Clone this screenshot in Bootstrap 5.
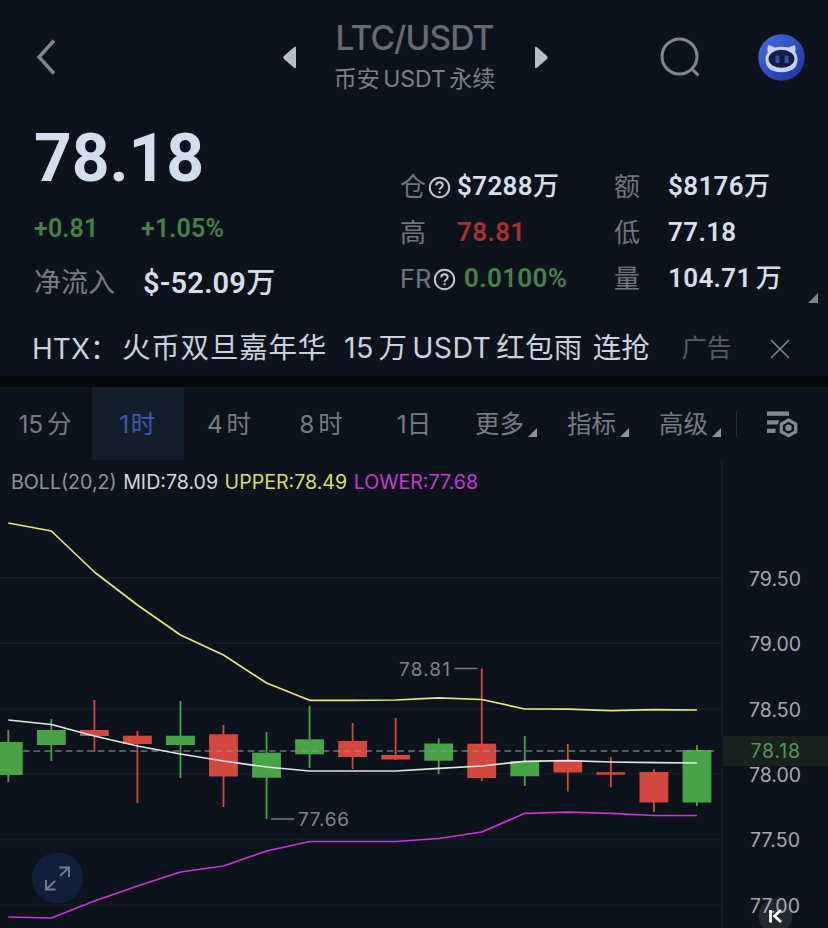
<!DOCTYPE html>
<html lang="zh-CN">
<head>
<meta charset="utf-8">
<meta name="viewport" content="width=device-width, initial-scale=1">
<title>LTC/USDT</title>
<link href="https://cdn.jsdelivr.net/npm/bootstrap@5.3.0/dist/css/bootstrap.min.css" rel="stylesheet">
<style>
:root{--ui:Inter,"Noto Sans CJK SC",sans-serif;--num:Roboto,"Noto Sans CJK SC",sans-serif}
html,body{height:100%}
body{background:#0c121b;color:#d7dfee;font-family:var(--ui);overflow:hidden;line-height:1}
svg{display:block;flex:none}
.text-dim{color:#777c85}
.text-up{color:#46804a}
.text-down{color:#a82f2a}
.topbar{height:114px;padding:0 23px 0 36px}
.topbar .pair{width:238px;padding-right:3px}
.prev{margin-left:227px}
.find{margin-left:111px}
.pair-name{font-size:33.5px;font-weight:500;letter-spacing:-.9px;line-height:40px;margin-top:-3px;color:#646972}
.pair-sub{font-size:23px;line-height:30px;margin-top:6px;word-spacing:-3px;color:#7a7f88}
.quote{height:207px;padding-left:34px;font-family:var(--num)}
.last-col{width:366px}
.last-price{font-size:66px;font-weight:700;line-height:90px;height:90px;letter-spacing:-.1px;color:#d3dfee}
.delta{font-size:25px;font-weight:600;line-height:49px;letter-spacing:.15px}
.delta span:first-child{width:107px}
.flow-row{line-height:60px;font-size:29px}
.flow-row .k{width:109px;font-size:27px}
.flow-row .v{font-weight:600;letter-spacing:.2px}
.stats{padding-top:49px;line-height:46px;font-size:26px}
.stats .k{font-family:var(--ui);font-size:26px;line-height:44px;padding-top:2px;color:#70757e}
.stats .v{font-weight:600;letter-spacing:.35px}
.cjk{font-weight:500}
.c1{width:57px}
.c1 svg{margin-left:2px}
.fr{width:64px}
.fr .lbl{font-size:25.5px}
.stat-a{width:214px}
.c2{width:54px}
.promo{height:55px;padding:0 37px 0 32px;font-size:28.5px;color:#cbd1de}
.promo-brand{font-size:28px}
.promo-head{margin-left:4px;letter-spacing:.8px}
.promo-body{margin-left:17px;letter-spacing:.35px;word-spacing:-3.5px}
.promo-tail{margin-left:10px}
.ad-mark{margin-left:32px;font-size:25px;color:#565b65}
.divider{height:11px;background:#04070b}
.tabs-row{height:73px;font-size:24.5px;color:#757b85}
.tabs-row .tab{width:92px;height:73px;padding-top:1px;word-spacing:-3px}
.tab.plain{padding-right:2px}
.tab.current{background:#131e2d;color:#355cae}
.tab.tight{letter-spacing:1.5px}
.tab svg{margin:17px 0 0 4px}
.sep{width:1px;height:26px;background:#2a303a}
.tune{margin-left:29px}
.chart{height:468px}
.legend-row{top:11px;left:11px;font-size:19.6px;line-height:22px;gap:6.500px}
.lg-name{color:#8f949d}
.lg-mid{color:#d5d8dd}
.lg-up{color:#dede62}
.lg-low{color:#c63ad3}
.chart text{font-family:var(--ui)}
</style>
<script src="https://cdn.jsdelivr.net/npm/bootstrap@5.3.0/dist/js/bootstrap.bundle.min.js"></script>
</head>
<body>
<header class="topbar d-flex align-items-center">
  <svg width="20" height="36" viewBox="0 0 20 36" fill="none" stroke="#80858e" stroke-width="3.400"><path d="M18 1.500 3 18 18 34.500"/></svg>
  <svg class="prev" width="14" height="23" viewBox="0 0 14 23"><path d="M13 2v19q0 2-2 .7L1 13q-1.500-1.500 0-3L11 1.300q2-1.300 2 .7Z" fill="#b9bec6"/></svg>
  <div class="pair text-center">
    <div class="pair-name">LTC/USDT</div>
    <div class="pair-sub">币安 USDT 永续</div>
  </div>
  <svg width="14" height="23" viewBox="0 0 14 23"><path d="M0 2v19q0 2 2 .7L12 13q1.500-1.500 0-3L2 1.300Q0 0 0 2Z" fill="#b9bec6"/></svg>
  <svg class="find" width="42" height="42" viewBox="0 0 42 42" fill="none" stroke="#82878f" stroke-width="3"><circle cx="19.500" cy="20.500" r="17.500"/><path d="m31 32 7.500 7.500"/></svg>
  <svg class="ms-auto" width="47" height="47" viewBox="0 0 47 47"><defs><linearGradient id="g" x1="0" y1="0" x2="1" y2="1"><stop offset="0" stop-color="#456cdb"/><stop offset="1" stop-color="#18349f"/></linearGradient></defs><circle cx="23.500" cy="23.500" r="23.200" fill="url(#g)"/><path d="M10 11.300q4 .2 6.500 2.200 7-1.400 14 0 2.500-2 6.500-2.200 1 3 .3 7 2.200 3 2.200 7 0 12.900-16 12.900T7.500 25.300q0-4 2.200-7-.7-4 .3-7Z" fill="#c3d1f4"/><ellipse cx="23.500" cy="24.800" rx="13" ry="9" fill="#121e39"/><rect x="17.400" y="21.500" width="4" height="7.500" rx="1" fill="#304fc2"/><rect x="26.600" y="21.500" width="4" height="7.500" rx="1" fill="#304fc2"/></svg>
</header>

<section class="quote d-flex">
  <div class="last-col">
    <div class="last-price">78.18</div>
    <div class="delta text-up d-flex"><span>+0.81</span><span>+1.05%</span></div>
    <div class="flow-row d-flex"><span class="k text-dim">净流入</span><span class="v">$-52.09<span class="cjk">万</span></span></div>
  </div>
  <div class="stats stat-a">
    <div class="d-flex"><div class="k c1 d-flex align-items-center">仓<svg width="23" height="23" viewBox="0 0 23 23" fill="none" stroke="#c3c9d4" stroke-width="2"><circle cx="11.500" cy="11.500" r="9.700"/><path d="M8.300 9.500q0-3.200 3.200-3.200t3.200 2.800q0 1.500-1.500 2.400-1.500.9-1.500 2.300M11.600 15.300v2"/></svg></div><div class="v">$7288<span class="cjk">万</span></div></div>
    <div class="d-flex"><div class="k c1">高</div><div class="v text-down">78.81</div></div>
    <div class="d-flex"><div class="k c1 fr d-flex align-items-center"><span class="lbl">FR</span><svg width="23" height="23" viewBox="0 0 23 23" fill="none" stroke="#c3c9d4" stroke-width="2"><circle cx="11.500" cy="11.500" r="9.700"/><path d="M8.300 9.500q0-3.200 3.200-3.200t3.200 2.800q0 1.500-1.500 2.400-1.500.9-1.500 2.300M11.600 15.300v2"/></svg></div><div class="v text-up">0.0100%</div></div>
  </div>
  <div class="stats">
    <div class="d-flex"><div class="k c2">额</div><div class="v">$8176<span class="cjk">万</span></div></div>
    <div class="d-flex"><div class="k c2">低</div><div class="v">77.18</div></div>
    <div class="d-flex"><div class="k c2">量</div><div class="v">104.71<span class="cjk ms-1">万</span></div></div>
  </div>
  <svg class="ms-auto align-self-end mb-3" width="20" height="13" viewBox="0 0 20 13"><path d="M10 1v10H0Z" fill="#7f848d"/></svg>
</section>

<section class="promo d-flex align-items-center text-nowrap">
  <span class="promo-brand">HTX：</span><span class="promo-head">火币双旦嘉年华</span><span class="promo-body">15 万 USDT 红包雨</span><span class="promo-tail">连抢</span>
  <span class="ad-mark">广告</span>
  <svg class="ms-auto" width="22" height="22" viewBox="0 0 22 22" stroke="#7e838c" stroke-width="1.700"><path d="m2 2 18 18M20 2 2 20"/></svg>
</section>
<div class="divider"></div>

<nav class="tabs-row d-flex align-items-center">
  <div class="tab plain d-flex align-items-center justify-content-center">15 分</div>
  <div class="tab current tight d-flex align-items-center justify-content-center">1时</div>
  <div class="tab plain d-flex align-items-center justify-content-center">4 时</div>
  <div class="tab plain d-flex align-items-center justify-content-center">8 时</div>
  <div class="tab d-flex align-items-center justify-content-center">1日</div>
  <div class="tab d-flex align-items-center justify-content-center">更多<svg width="9" height="9" viewBox="0 0 9 9"><path d="M9 0v9H0Z" fill="#8d929b"/></svg></div>
  <div class="tab d-flex align-items-center justify-content-center">指标<svg width="9" height="9" viewBox="0 0 9 9"><path d="M9 0v9H0Z" fill="#8d929b"/></svg></div>
  <div class="tab d-flex align-items-center justify-content-center">高级<svg width="9" height="9" viewBox="0 0 9 9"><path d="M9 0v9H0Z" fill="#8d929b"/></svg></div>
  <div class="sep"></div>
  <svg class="tune" width="32" height="28" viewBox="0 0 32 28" fill="#838993"><path d="M1 1.500h22v4.200H1zM1 10.300h12.500l-2 4.200H1zM1 18.800h8.500V23H1z"/><path fill="none" stroke="#838993" stroke-width="3.200" d="m22.500 10 7.200 4v7.700l-7.200 4-7.200-4V14Z"/><circle cx="22.500" cy="17.800" r="3.300"/></svg>
</nav>

<main class="chart position-relative">
  <svg width="828" height="468" viewBox="0 460 828 468">
    <path d="M0 577.800H722M0 643.300H722M0 709H722M0 774H722M0 839.500H722M0 905H722M722 460V928" stroke="#151c26" stroke-width="1.500"/>
    <g id="candles"></g>
    <path d="M23 751H718" stroke="#8b959b" stroke-opacity=".75" stroke-width="1.300" stroke-dasharray="6.500 4.200"/>
    <g id="bands" fill="none" stroke-width="1.700" stroke-linejoin="round"></g>
    <path d="M454.500 668.500H477.500M271 819H294" stroke="#747a83" stroke-width="1.400"/>
    <g fill="#7d828b" font-size="19">
      <text x="399" y="675.500" textLength="51">78.81</text><text x="298" y="826" textLength="51">77.66</text>
    </g>
    <rect x="723" y="736" width="105" height="30" fill="#19211f"/>
    <g fill="#a3a8b1" font-size="19.500">
      <text x="749" y="585.500" textLength="52">79.50</text><text x="749" y="651" textLength="52">79.00</text>
      <text x="749" y="716.500" textLength="52">78.50</text><text x="749" y="782" textLength="52">78.00</text>
      <text x="750" y="847.300" textLength="50">77.50</text><text x="750" y="912.500" textLength="50">77.00</text>
      <text x="750.500" y="758" textLength="49.500" fill="#4b984b">78.18</text>
    </g>
    <circle cx="775.500" cy="916" r="17" fill="#b4bed2" fill-opacity=".13"/>
    <path d="M770.500 910v12.500M781 910l-6.500 6 6.500 6" fill="none" stroke="#fff" stroke-width="2.800"/>
    <circle cx="57.500" cy="878" r="25.500" fill="#11203a"/>
    <path d="M59.500 867.500h9.500V877M69 867.500l-9 8.500M46 880v9.500h9.500M46 889.500l9-8.500" fill="none" stroke="#747d8b" stroke-width="1.900"/>
  </svg>
  <div class="legend-row position-absolute d-flex text-nowrap">
    <span class="lg-name">BOLL(20,2)</span><span class="lg-mid">MID:78.09</span><span class="lg-up">UPPER:78.49</span><span class="lg-low">LOWER:77.68</span>
  </div>
</main>
<script>
const ns='http://www.w3.org/2000/svg',X=i=>8.3+i*43.04;
const add=(p,t,a)=>{const e=document.createElementNS(ns,t);for(const k in a)e.setAttribute(k,a[k]);p.append(e)};
// [rising, high, body top, body bottom, low]
const rows=[[1,730,742,775,782],[1,719,730,745,761],[0,700,730,736,752],[0,731,735.7,744,803],[1,701,735.7,745,778],[0,725,734.3,776.5,807],[1,732,752.7,777.7,819],[1,706,739.3,754.3,768],[0,723,741,757,769],[0,718,755,759.5,760],[1,738.5,743.5,760.7,774],[0,668.500,743.7,778,781],[1,736,761,776.3,786],[0,744,760.5,772.5,791.5],[0,757,772.2,774.7,787.5],[0,769,772,802.5,812],[1,745,750,802.5,806]];
rows.forEach((r,i)=>{const f=r[0]?'#47a346':'#d4473f',g=document.getElementById('candles');
add(g,'rect',{x:X(i)-.9,y:r[1],width:1.8,height:r[4]-r[1],fill:f});
add(g,'rect',{x:X(i)-14.4,y:r[2],width:28.8,height:r[3]-r[2],fill:f});});
const bands={'#e9e777':[523,531,572,605,635,655,683,700.3,700.3,700,697.8,699.5,709,709.2,710.7,709.6,710],
'#e4e5e6':[720,724.5,736,746,754,761,767,771,771,771,768.3,766,761.3,760.7,762,762.7,763],
'#c935d6':[917,918,901,886,872,866,851,841.5,841.5,841.5,838.5,832,813.3,812.2,813.3,815.5,815.5]};
for(const c in bands)add(document.getElementById('bands'),'polyline',{stroke:c,points:bands[c].map((y,i)=>X(i)+','+y).join(' ')});
</script>
</body>
</html>
